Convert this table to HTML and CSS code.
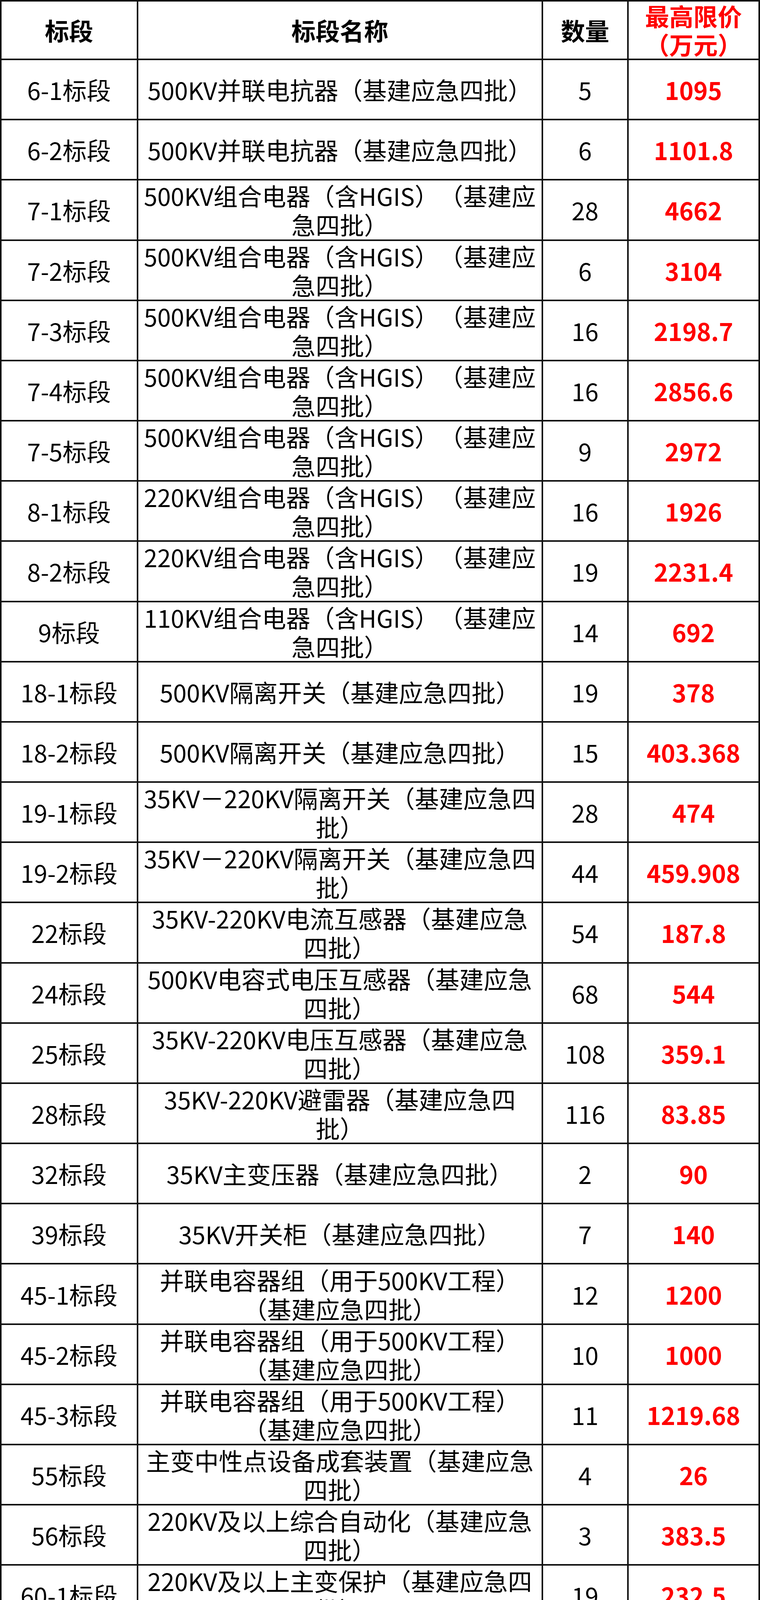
FILE: index.html
```html
<!DOCTYPE html>
<html lang="zh-CN">
<head>
<meta charset="utf-8">
<title>标段最高限价</title>
<link rel="stylesheet" href="styles.css">
</head>
<body>
<div class="sheet">
  <div class="row head">
    <div class="cell c1">标段</div>
    <div class="cell c2">标段名称</div>
    <div class="cell c3">数量</div>
    <div class="cell c4"><span class="ln">最高限价</span><span class="ln">（万元）</span></div>
  </div>

  <div class="row"><div class="cell c1">6-1标段</div><div class="cell c2"><span class="ln">500KV并联电抗器（基建应急四批）</span></div><div class="cell c3">5</div><div class="cell c4">1095</div></div>
  <div class="row"><div class="cell c1">6-2标段</div><div class="cell c2"><span class="ln">500KV并联电抗器（基建应急四批）</span></div><div class="cell c3">6</div><div class="cell c4">1101.8</div></div>
  <div class="row"><div class="cell c1">7-1标段</div><div class="cell c2"><span class="ln">500KV组合电器（含HGIS）（基建应</span><span class="ln">急四批）</span></div><div class="cell c3">28</div><div class="cell c4">4662</div></div>
  <div class="row"><div class="cell c1">7-2标段</div><div class="cell c2"><span class="ln">500KV组合电器（含HGIS）（基建应</span><span class="ln">急四批）</span></div><div class="cell c3">6</div><div class="cell c4">3104</div></div>
  <div class="row"><div class="cell c1">7-3标段</div><div class="cell c2"><span class="ln">500KV组合电器（含HGIS）（基建应</span><span class="ln">急四批）</span></div><div class="cell c3">16</div><div class="cell c4">2198.7</div></div>
  <div class="row"><div class="cell c1">7-4标段</div><div class="cell c2"><span class="ln">500KV组合电器（含HGIS）（基建应</span><span class="ln">急四批）</span></div><div class="cell c3">16</div><div class="cell c4">2856.6</div></div>
  <div class="row"><div class="cell c1">7-5标段</div><div class="cell c2"><span class="ln">500KV组合电器（含HGIS）（基建应</span><span class="ln">急四批）</span></div><div class="cell c3">9</div><div class="cell c4">2972</div></div>
  <div class="row"><div class="cell c1">8-1标段</div><div class="cell c2"><span class="ln">220KV组合电器（含HGIS）（基建应</span><span class="ln">急四批）</span></div><div class="cell c3">16</div><div class="cell c4">1926</div></div>
  <div class="row"><div class="cell c1">8-2标段</div><div class="cell c2"><span class="ln">220KV组合电器（含HGIS）（基建应</span><span class="ln">急四批）</span></div><div class="cell c3">19</div><div class="cell c4">2231.4</div></div>
  <div class="row"><div class="cell c1">9标段</div><div class="cell c2"><span class="ln">110KV组合电器（含HGIS）（基建应</span><span class="ln">急四批）</span></div><div class="cell c3">14</div><div class="cell c4">692</div></div>
  <div class="row"><div class="cell c1">18-1标段</div><div class="cell c2"><span class="ln">500KV隔离开关（基建应急四批）</span></div><div class="cell c3">19</div><div class="cell c4">378</div></div>
  <div class="row"><div class="cell c1">18-2标段</div><div class="cell c2"><span class="ln">500KV隔离开关（基建应急四批）</span></div><div class="cell c3">15</div><div class="cell c4">403.368</div></div>
  <div class="row"><div class="cell c1">19-1标段</div><div class="cell c2"><span class="ln">35KV－220KV隔离开关（基建应急四</span><span class="ln">批）</span></div><div class="cell c3">28</div><div class="cell c4">474</div></div>
  <div class="row"><div class="cell c1">19-2标段</div><div class="cell c2"><span class="ln">35KV－220KV隔离开关（基建应急四</span><span class="ln">批）</span></div><div class="cell c3">44</div><div class="cell c4">459.908</div></div>
  <div class="row"><div class="cell c1">22标段</div><div class="cell c2"><span class="ln">35KV-220KV电流互感器（基建应急</span><span class="ln">四批）</span></div><div class="cell c3">54</div><div class="cell c4">187.8</div></div>
  <div class="row"><div class="cell c1">24标段</div><div class="cell c2"><span class="ln">500KV电容式电压互感器（基建应急</span><span class="ln">四批）</span></div><div class="cell c3">68</div><div class="cell c4">544</div></div>
  <div class="row"><div class="cell c1">25标段</div><div class="cell c2"><span class="ln">35KV-220KV电压互感器（基建应急</span><span class="ln">四批）</span></div><div class="cell c3">108</div><div class="cell c4">359.1</div></div>
  <div class="row"><div class="cell c1">28标段</div><div class="cell c2"><span class="ln">35KV-220KV避雷器（基建应急四</span><span class="ln">批）</span></div><div class="cell c3">116</div><div class="cell c4">83.85</div></div>
  <div class="row"><div class="cell c1">32标段</div><div class="cell c2"><span class="ln">35KV主变压器（基建应急四批）</span></div><div class="cell c3">2</div><div class="cell c4">90</div></div>
  <div class="row"><div class="cell c1">39标段</div><div class="cell c2"><span class="ln">35KV开关柜（基建应急四批）</span></div><div class="cell c3">7</div><div class="cell c4">140</div></div>
  <div class="row"><div class="cell c1">45-1标段</div><div class="cell c2"><span class="ln">并联电容器组（用于500KV工程）</span><span class="ln">（基建应急四批）</span></div><div class="cell c3">12</div><div class="cell c4">1200</div></div>
  <div class="row"><div class="cell c1">45-2标段</div><div class="cell c2"><span class="ln">并联电容器组（用于500KV工程）</span><span class="ln">（基建应急四批）</span></div><div class="cell c3">10</div><div class="cell c4">1000</div></div>
  <div class="row"><div class="cell c1">45-3标段</div><div class="cell c2"><span class="ln">并联电容器组（用于500KV工程）</span><span class="ln">（基建应急四批）</span></div><div class="cell c3">11</div><div class="cell c4">1219.68</div></div>
  <div class="row"><div class="cell c1">55标段</div><div class="cell c2"><span class="ln">主变中性点设备成套装置（基建应急</span><span class="ln">四批）</span></div><div class="cell c3">4</div><div class="cell c4">26</div></div>
  <div class="row"><div class="cell c1">56标段</div><div class="cell c2"><span class="ln">220KV及以上综合自动化（基建应急</span><span class="ln">四批）</span></div><div class="cell c3">3</div><div class="cell c4">383.5</div></div>
  <div class="row"><div class="cell c1">60-1标段</div><div class="cell c2"><span class="ln">220KV及以上主变保护（基建应急四</span><span class="ln">批）</span></div><div class="cell c3">19</div><div class="cell c4">232.5</div></div>
  <div class="row"><div class="cell c1">60-2标段</div><div class="cell c2"><span class="ln">220KV及以上主变保护（基建应急四</span><span class="ln">批）</span></div><div class="cell c3">14</div><div class="cell c4">182.5</div></div>
  <div class="row"><div class="cell c1">62-1标段</div><div class="cell c2"><span class="ln">500KV断路器保护（基建应急四批）</span></div><div class="cell c3">23</div><div class="cell c4">192.5</div></div>
  <div class="row"><div class="cell c1">62-2标段</div><div class="cell c2"><span class="ln">500KV断路器保护（基建应急四批）</span></div><div class="cell c3">17</div><div class="cell c4">140.5</div></div>
  <div class="row"><div class="cell c1">62-3标段</div><div class="cell c2"><span class="ln">500KV断路器保护（基建应急四批）</span></div><div class="cell c3">2</div><div class="cell c4">17.5</div></div>
  <div class="row"><div class="cell c1">64-1标段</div><div class="cell c2"><span class="ln">电抗器保护（基建应急四批）</span></div><div class="cell c3">6</div><div class="cell c4">63.4</div></div>
  <div class="row"><div class="cell c1">64-2标段</div><div class="cell c2"><span class="ln">电抗器保护（基建应急四批）</span></div><div class="cell c3">6</div><div class="cell c4">63.4</div></div>
  <div class="row"><div class="cell c1">65-1标段</div><div class="cell c2"><span class="ln">220KV及以上线路保护（基建应急四</span><span class="ln">批）</span></div><div class="cell c3">25</div><div class="cell c4">308.1</div></div>
  <div class="row"><div class="cell c1">65-2标段</div><div class="cell c2"><span class="ln">220KV及以上线路保护（基建应急四</span><span class="ln">批）</span></div><div class="cell c3">25</div><div class="cell c4">308.1</div></div>
  <div class="row"><div class="cell c1">66标段</div><div class="cell c2"><span class="ln">110KV及以下线路保护（基建应急四</span><span class="ln">批）</span></div><div class="cell c3">3</div><div class="cell c4">28.5</div></div>
  <div class="row"><div class="cell c1">67-1标段</div><div class="cell c2"><span class="ln">220KV及以上母线保护（基建应急四</span><span class="ln">批）</span></div><div class="cell c3">17</div><div class="cell c4">209.4</div></div>
  <div class="row"><div class="cell c1">67-2标段</div><div class="cell c2"><span class="ln">220KV及以上母线保护（基建应急四</span><span class="ln">批）</span></div><div class="cell c3">17</div><div class="cell c4">209.4</div></div>
  <div class="row"><div class="cell c1">68标段</div><div class="cell c2"><span class="ln">110KV母线保护（基建应急四批）</span></div><div class="cell c3">1</div><div class="cell c4">12</div></div>
  <div class="row"><div class="cell c1">71-1标段</div><div class="cell c2"><span class="ln">一体化电源系统（含通讯高频开关电</span><span class="ln">源及蓄电池）（基建应急四批）</span></div><div class="cell c3">13</div><div class="cell c4">380.5</div></div>
  <div class="row"><div class="cell c1">71-2标段</div><div class="cell c2"><span class="ln">一体化电源系统（含通讯高频开关电</span><span class="ln">源及蓄电池）（基建应急四批）</span></div><div class="cell c3">7</div><div class="cell c4">347.105</div></div>
  <div class="row"><div class="cell c1">75标段</div><div class="cell c2"><span class="ln">故障录波器（基建应急四批）</span></div><div class="cell c3">35</div><div class="cell c4">212.6</div></div>
  <div class="row"><div class="cell c1">122标段</div><div class="cell c2"><span class="ln">光数音配线架（基建应急四批）</span></div><div class="cell c3">18</div><div class="cell c4">54</div></div>
  <div class="row"><div class="cell c1">143标段</div><div class="cell c2"><span class="ln">500KV罐式断路器（基建应急四批）</span></div><div class="cell c3">13</div><div class="cell c4">914.4</div></div>
  <div class="row"><div class="cell c1">144标段</div><div class="cell c2"><span class="ln">500KV避雷器（基建应急四批）</span></div><div class="cell c3">60</div><div class="cell c4">255.12</div></div>
</div>
</body>
</html>
```

FILE: styles.css
```css
html, body {
  margin: 0;
  padding: 0;
  background: #ffffff;
}

.sheet {
  box-sizing: border-box;
  width: 1945px;
  height: 6938px;
  display: grid;
  grid-template-columns: 345.5px 1032.5px 214.5px 332.5px;
  grid-template-rows: 146px repeat(44, 150.18px);
  gap: 4px;
  padding: 4px;
  background: #111111;
  font-family: "Noto Sans CJK SC", "Noto Sans", sans-serif;
  font-size: 62px;
  color: #000000;
  text-spacing-trim: space-all;
}

.row {
  display: contents;
}

.cell {
  background: #ffffff;
  display: flex;
  flex-direction: column;
  align-items: center;
  justify-content: center;
  text-align: center;
  white-space: nowrap;
  line-height: 74px;
  min-width: 0;
  min-height: 0;
}

.ln {
  display: block;
  white-space: nowrap;
}

.c4 {
  color: #ff0000;
  font-weight: 700;
}

.head .cell {
  font-weight: 700;
}

.head .c4 {
  line-height: 73px;
}
```
